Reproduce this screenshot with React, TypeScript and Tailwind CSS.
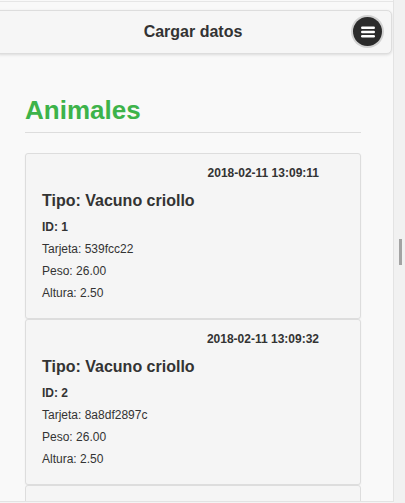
const animales = [
  { id: 1, fecha: "2018-02-11 13:09:11", tipo: "Vacuno criollo", tarjeta: "539fcc22", peso: "26.00", altura: "2.50" },
  { id: 2, fecha: "2018-02-11 13:09:32", tipo: "Vacuno criollo", tarjeta: "8a8df2897c", peso: "26.00", altura: "2.50" },
];

const MenuButton = () => (
  <button className="flex h-[29px] w-[29px] items-center justify-center rounded-full bg-[#2b2b2b] shadow-[0_0_0_2px_rgba(0,0,0,0.15)]">
    <svg width="14" height="12" viewBox="0 0 14 12">
      <rect x="0" y="0.5" width="14" height="2.4" rx="1.2" fill="#fff" />
      <rect x="0" y="4.8" width="14" height="2.4" rx="1.2" fill="#fff" />
      <rect x="0" y="9.1" width="14" height="2.4" rx="1.2" fill="#fff" />
    </svg>
  </button>
);

const App = () => {
  return (
    <div className="flex h-[503px] w-[405px] overflow-hidden bg-[#f4f4f4] font-['Liberation_Sans',Arial,sans-serif] text-[#333]">
      {/* Page */}
      <div className="h-[502px] w-[394px] shrink-0 overflow-hidden border-r border-b border-[#e3e3e3] bg-[#f9f9f9]">
        <div className="mt-[1px] border-t border-[#e6e6e6] pt-[8px]">
          {/* Header */}
          <div className="relative -ml-[6px] flex h-[44px] w-[398px] items-center justify-center rounded-[5px] border border-[#dddddd] bg-[#f6f6f6] shadow-[0_1px_3px_rgba(0,0,0,0.12)]">
            <h1 className="text-[16px] font-bold leading-[20px]">Cargar datos</h1>
            <div className="absolute top-[6px] right-[9px]">
              <MenuButton />
            </div>
          </div>
        </div>

        <div className="px-[25px] pt-[40px] w-[386px]">
          <h2 className="text-[26px] font-bold leading-[32px] text-[#3db34a]">Animales</h2>
          <div className="mt-[6px] h-px bg-[#dddddd]" />

          <div className="mt-[20px] flex flex-col">
            {animales.map((a) => (
              <div key={a.id} className="rounded-[3px] border border-[#dddddd] bg-[#f5f5f5] pt-[11px] pb-[14px] pl-[16px] pr-[41px] shadow-[0_1px_2px_rgba(0,0,0,0.05)]">
                <p className="text-right text-[12px] font-bold leading-4">{a.fecha}</p>
                <h3 className="mt-[10px] mb-[5px] text-[16px] font-bold leading-[20px]">Tipo: {a.tipo}</h3>
                <p className="text-[12px] font-bold leading-[22px]">ID: {a.id}</p>
                <p className="text-[12px] leading-[22px]">Tarjeta: {a.tarjeta}</p>
                <p className="text-[12px] leading-[22px]">Peso: {a.peso}</p>
                <p className="text-[12px] leading-[22px]">Altura: {a.altura}</p>
              </div>
            ))}
            {/* next card, scrolled below the fold */}
            <div className="h-[30px] rounded-[3px] border border-[#dddddd] bg-[#f5f5f5]" />
          </div>
        </div>
      </div>

      {/* Scrollbar */}
      <div className="relative flex-1 bg-[#f1f1f1]">
        <div className="absolute top-[239px] left-[5px] h-[26px] w-[3px] bg-[#a3a3a3]" />
      </div>
    </div>
  );
};

export default App;
